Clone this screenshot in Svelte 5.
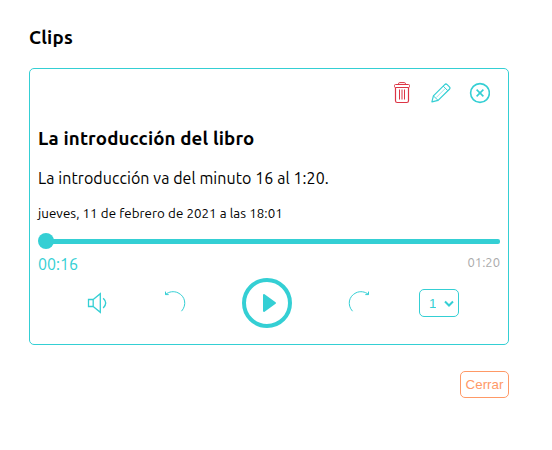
<script>
  let playing = $state(false);
</script>

<main>
  <h2>Clips</h2>
  <section class="card">
    <div class="actions">
      <button class="icon red" aria-label="Eliminar">
        <svg width="20" height="22" viewBox="0 0 20 22" fill="none" stroke="currentColor">
          <path d="M3.5 5.5v13.2q0 1.8 1.8 1.8h9.4q1.8 0 1.8-1.8V5.5" stroke-width="1.2" />
          <rect x="2.5" y="2.5" width="15" height="3" rx="1" />
          <path d="M6.5 2.5V1.8Q6.5.6 7.7.6h4.6q1.2 0 1.2 1.2v.7" />
          <path d="M7.5 7.5v10M10 7.5v10M12.5 7.5v10" />
        </svg>
      </button>
      <button class="icon edit" aria-label="Editar">
        <svg width="20" height="20" viewBox="0 0 20 20" fill="none" stroke="currentColor" stroke-linejoin="round">
          <path d="M.9 18.9l1.5-6L13.7 1.6q1.2-1.2 2.5 0l2.2 2.2q1.2 1.2 0 2.5L7.1 17.4z" stroke-width="1.2" />
          <path d="M2.4 12.9l4.7 4.5M12.2 3.1l4.7 4.7" stroke-width="1" />
          <path d="M5.2 14.6L14.3 5.4" stroke-width=".5" />
        </svg>
      </button>
      <button class="icon" aria-label="Quitar">
        <svg width="22" height="22" viewBox="0 0 22 22" fill="none" stroke="currentColor">
          <circle cx="12" cy="11" r="9.4" stroke-width="1.6" />
          <path d="M8.6 7.6l6.8 6.8M15.4 7.6l-6.8 6.8" stroke-width="1.6" />
        </svg>
      </button>
    </div>
    <h3>La introducción del libro</h3>
    <p class="desc">La introducción va del minuto 16 al 1:20.</p>
    <p class="date">jueves, 11 de febrero de 2021 a las 18:01</p>
    <div class="track"><span class="thumb"></span><span class="line"></span></div>
    <div class="times"><span class="now">00:16</span><span class="end">01:20</span></div>
    <div class="controls">
      <button class="icon vol" aria-label="Volumen">
        <svg width="20" height="22" viewBox="0 0 20 22" fill="none" stroke="currentColor" stroke-width="1.3">
          <path d="M1.5 7.5h4.7v7H1.5zM6.2 7.5L13.3 1.7v18.6L6.2 14.5" />
          <path d="M16.2 6.3q5 4.7 0 9.6" stroke-width="1.4" />
        </svg>
      </button>
      <button class="icon back" aria-label="Retroceder">
        <svg width="22" height="24" viewBox="0 0 22 24" fill="none" stroke="currentColor">
          <path d="M1.5 3.4C5 .6 9.8-.2 14 1.8 21.3 5.2 23 14 17.5 20.2" />
          <path d="M1.5.6v3h3.2" />
        </svg>
      </button>
      <button class="icon play" aria-label="Reproducir" onclick={() => (playing = !playing)}>
        <svg width="50" height="50" viewBox="0 0 50 50">
          <circle cx="25" cy="25" r="23" fill="none" stroke="currentColor" stroke-width="4" />
          <path d="M22 17L33 25 22 33z" fill="currentColor" stroke="currentColor" stroke-width="2" stroke-linejoin="round" />
        </svg>
      </button>
      <button class="icon forward" aria-label="Avanzar">
        <svg width="22" height="24" viewBox="0 0 22 24" fill="none" stroke="currentColor">
          <path d="M20.5 3.4C17 .6 12.2-.2 8 1.8 .7 5.2-1 14 4.5 20.2" />
          <path d="M20.5.6v3h-3.2" />
        </svg>
      </button>
      <button class="speed" aria-label="Velocidad">
        <span>1x</span>
        <svg width="10" height="7" viewBox="0 0 10 7" fill="none" stroke="currentColor" stroke-width="2">
          <path d="M1 1.5l4 4 4-4" />
        </svg>
      </button>
    </div>
  </section>
  <footer><button class="close">Cerrar</button></footer>
</main>

<style>
  :global(body) { margin: 0; background: #fff; }
  main {
    box-sizing: border-box;
    width: 552px;
    height: 450px;
    padding: 26px 43px 0 29px;
    font-family: Ubuntu, "Noto Sans", sans-serif;
    color: #000;
  }
  h2, h3, p { margin: 0; white-space: nowrap; }
  h2, h3 { font-size: 18.72px; line-height: 24px; font-weight: 700; letter-spacing: 0.14px; }
  h2 { height: 42px; letter-spacing: 0.25px; }
  h3 { margin-top: 23px; }
  button { margin: 0; background: none; font: inherit; cursor: pointer; }
  .card {
    box-sizing: border-box;
    width: 480px;
    height: 277px;
    padding: 12px 8px 0;
    border: 1px solid #34cfd4;
    border-radius: 5px;
  }
  .icon { display: block; padding: 0; border: 0; color: #34cfd4; }
  .icon svg { display: block; }
  .red { color: #dc3545; }
  .actions {
    display: flex;
    justify-content: flex-end;
    align-items: center;
    gap: 18px;
    height: 23px;
    padding-right: 10px;
  }
  .edit { margin: 0 -1px 0 1px; }
  .desc { margin-top: 15px; font-size: 16px; line-height: 24px; letter-spacing: 0.07px; }
  .date { margin-top: 15px; font-size: 13.333px; line-height: 18px; letter-spacing: 0.05px; }
  .track { display: flex; align-items: center; height: 16px; margin-top: 10px; }
  .thumb { width: 16px; height: 16px; border-radius: 50%; background: #34cfd4; }
  .line { flex: 1; height: 5px; margin-left: -2px; border-radius: 0 2px 2px 0; background: #34cfd4; }
  .times { display: flex; justify-content: space-between; height: 29px; line-height: 30px; }
  .now { font-size: 16px; color: #34cfd4; }
  .end { font-size: 13px; line-height: 26px; color: #aaa; }
  .controls {
    display: flex;
    align-items: center;
    height: 50px;
    padding-left: 49px;
  }
  .back { margin-left: 57px; }
  .play { margin-left: 56px; }
  .forward { margin-left: 56px; }
  .speed {
    display: flex;
    align-items: center;
    box-sizing: border-box;
    width: 40px;
    height: 28px;
    margin-left: 49px;
    padding: 0 4px 0 9px;
    border: 1px solid #34cfd4;
    border-radius: 5px;
    color: #34cfd4;
    font: 13.333px "Liberation Sans", sans-serif;
  }
  .speed span { width: 8px; margin-right: 8px; overflow: hidden; text-align: left; white-space: nowrap; }
  .speed svg { flex: none; }
  footer { display: flex; justify-content: flex-end; padding-top: 26px; }
  .close {
    box-sizing: border-box;
    width: 49px;
    height: 27px;
    padding: 0;
    border: 1px solid #ff9966;
    border-radius: 5px;
    color: #ff9966;
    font: 13.333px "Liberation Sans", sans-serif;
  }
</style>
